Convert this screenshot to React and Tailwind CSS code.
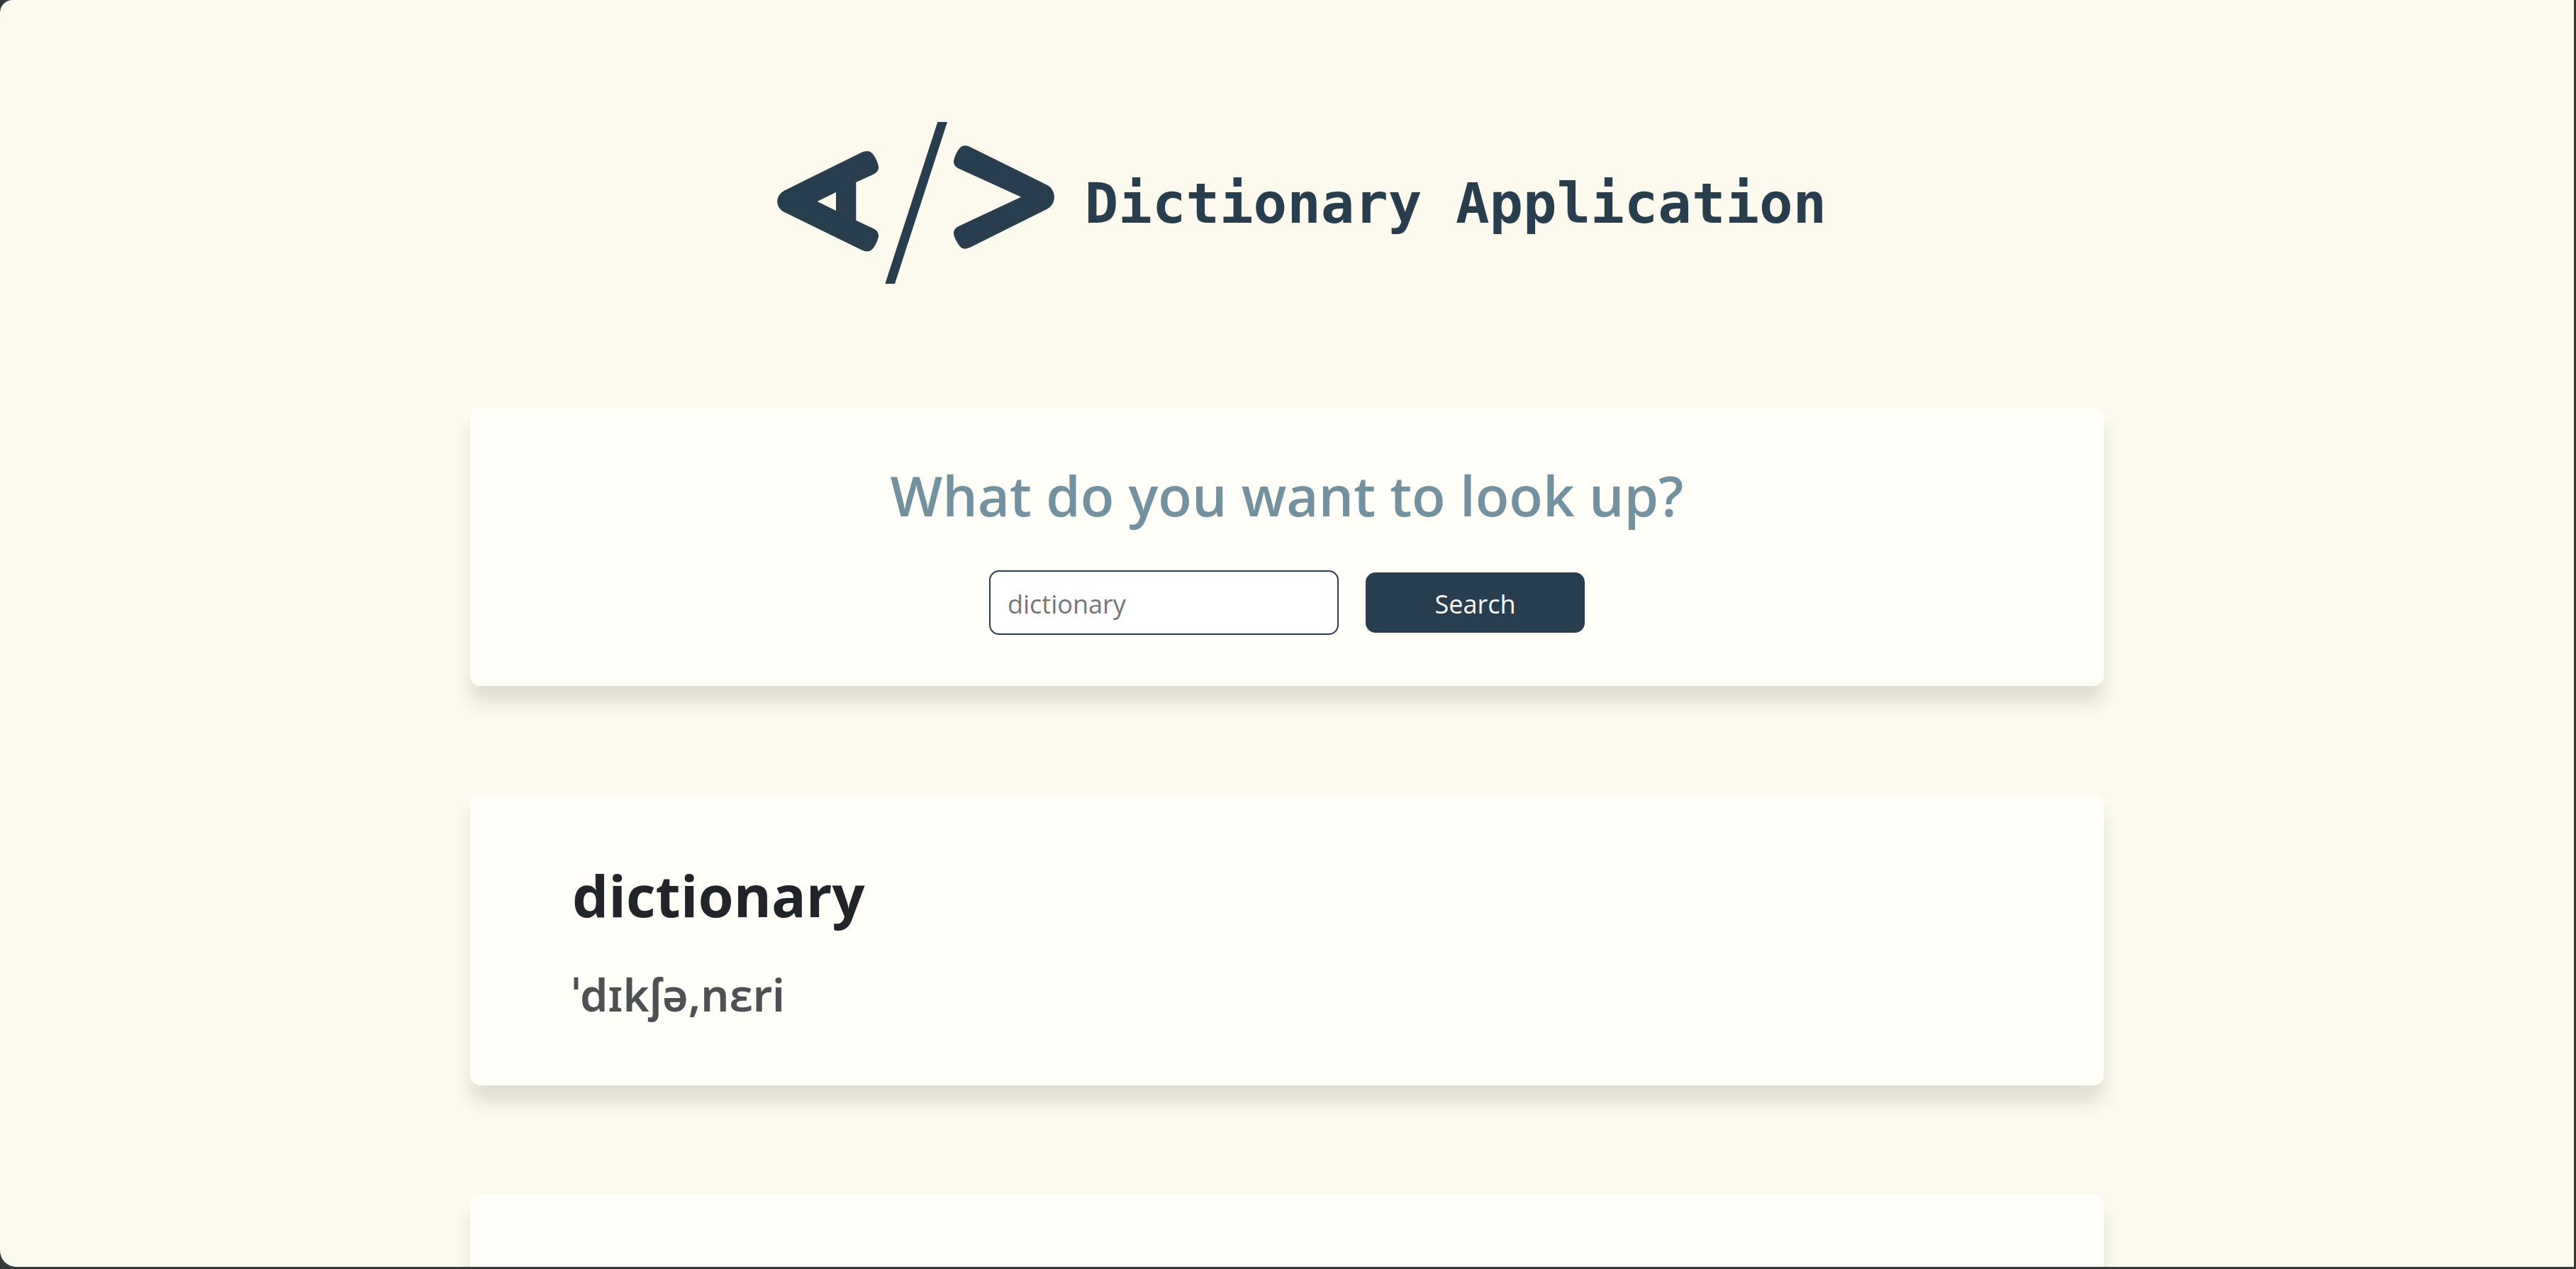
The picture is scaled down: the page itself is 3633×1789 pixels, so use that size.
function Logo() {
  return (
    <svg viewBox="-18 0 1398 810" className="h-[270px] w-[466px] shrink-0 fill-[#283e4f]" aria-hidden="true">
      <path
        fillRule="evenodd"
        d="M138 356 L463 196 C492 182 507 188 523 216 C529 227 533 238 536 249 C540 266 533 278 516 287 L442 321 V482 L516 517 C533 526 540 539 536 555 C533 567 528 578 522 588 C507 614 492 620 463 606 L138 447 C99 426 99 378 138 356 Z M278 402 L357 363 V441 Z"
      />
      <path d="M787 66 H828 L606 750 H565 Z" />
      <path d="M925 172 L1250 332 C1291 354 1291 413 1250 434 L925 596 C896 608 886 602 870 576 C864 566 859 555 856 544 C852 528 859 515 877 506 L1140 383 L877 263 C859 254 852 242 856 225 C859 214 864 202 870 192 C886 166 896 160 925 172 Z" />
    </svg>
  );
}

function Card({ className = "", children }) {
  return (
    <section
      className={`w-full max-w-[2304px] shrink-0 rounded-[14px] bg-[#fffef8] shadow-[0_24px_24px_rgba(0,0,0,0.11)] ${className}`}
    >
      {children}
    </section>
  );
}

export default function App() {
  return (
    <div className="h-screen bg-[#363939] pr-[3px] pb-[3px] font-['Open_Sans',sans-serif]">
      <div className="flex h-full flex-col items-center gap-[154px] overflow-hidden rounded-tl-[18px] rounded-bl-[23px] bg-[#fcfaee] pt-[150px]">
        <header className="flex items-center gap-2.5">
          <Logo />
          <h1 className="pt-1 font-['DejaVu_Sans_Mono',monospace] text-[79px] leading-[94px] font-bold whitespace-nowrap text-[#283e4f]">
            Dictionary Application
          </h1>
        </header>

        <Card className="flex flex-col items-center gap-[59px] pt-[77px] pb-[72px]">
          <h2 className="text-[78px] leading-[94px] font-semibold text-[#73919e]">
            <label htmlFor="word">What do you want to look up?</label>
          </h2>
          <form className="flex items-center gap-[38px]" onSubmit={(e) => e.preventDefault()}>
            <input
              id="word"
              type="text"
              placeholder="dictionary"
              className="h-[91px] w-[493px] rounded-[14px] border-2 border-[#283e4f] bg-white px-6 pt-1 text-[36px] text-[#212429] placeholder:text-[#757575]"
            />
            <button type="submit" className="h-[85px] w-[309px] rounded-[14px] bg-[#283e4f] pt-1 text-[36px] text-white">
              Search
            </button>
          </form>
        </Card>

        <Card className="flex flex-col gap-[54px] px-36 pt-[92px] pb-[90px]">
          <h2 className="text-[81px] leading-[97px] font-bold text-[#212429]">dictionary</h2>
          <h3 className="font-['Noto_Sans',sans-serif] text-[63px] leading-[76px] font-semibold text-[#4d5154]">
            ˈdɪkʃə,nɛri
          </h3>
        </Card>

        <Card className="min-h-[409px]" />
      </div>
    </div>
  );
}
